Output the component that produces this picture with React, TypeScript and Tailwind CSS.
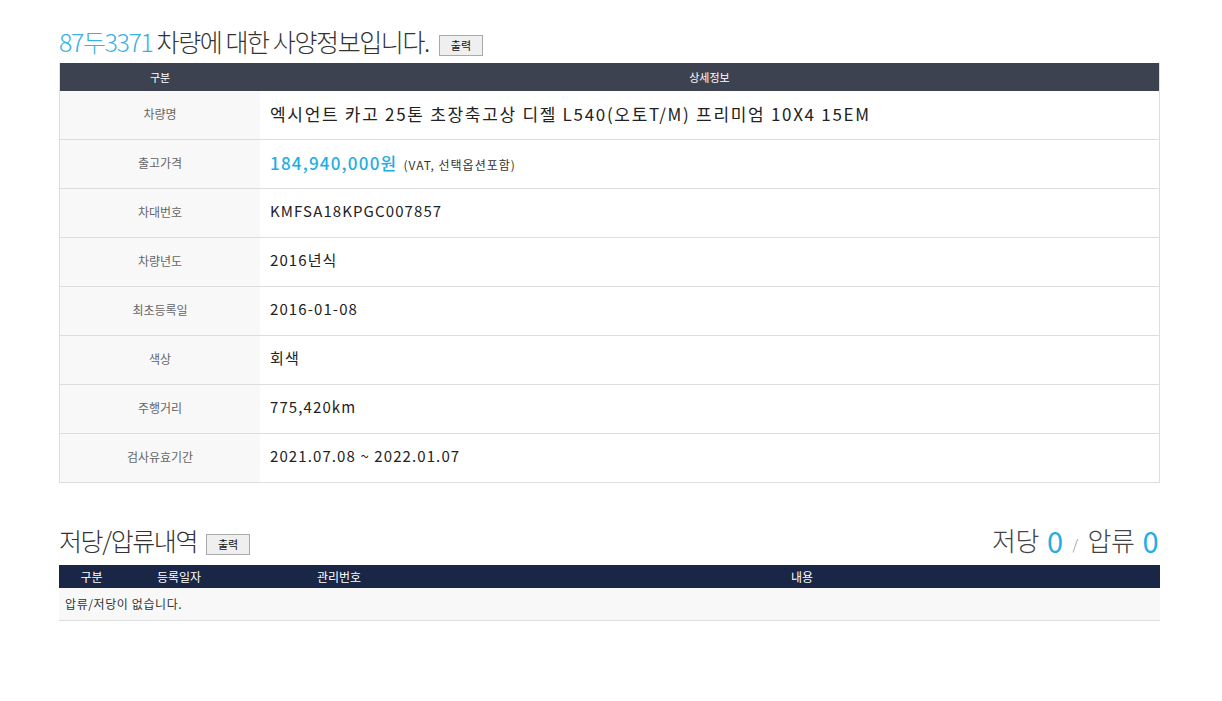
import React from 'react'

const font = { fontFamily: '"Noto Sans CJK KR", "Noto Sans", sans-serif' }

const rows: { label: string; value: React.ReactNode }[] = [
  {
    label: '차량명',
    value: (
      <span className="text-[17px] tracking-[1.7px] text-[#222]">
        엑시언트 카고 25톤 초장축고상 디젤 L540(오토T/M) 프리미엄 10X4 15EM
      </span>
    )
  },
  {
    label: '출고가격',
    value: (
      <span className="flex items-baseline gap-[6px]">
        <span className="text-[17px] font-medium tracking-[1.2px] text-[#1eaee4]">
          184,940,000원
        </span>
        <span className="text-[12px] tracking-[1px] text-[#333]">(VAT, 선택옵션포함)</span>
      </span>
    )
  },
  { label: '차대번호', value: 'KMFSA18KPGC007857' },
  { label: '차량년도', value: '2016년식' },
  { label: '최초등록일', value: '2016-01-08' },
  { label: '색상', value: '회색' },
  { label: '주행거리', value: '775,420km' },
  { label: '검사유효기간', value: '2021.07.08 ~ 2022.01.07' }
]

const PrintButton = () => (
  <button className="h-[21px] w-[44px] border border-[#aaa] bg-[#efefef] text-[11px] leading-none text-[#111]">
    출력
  </button>
)

const App = () => {
  return (
    <div className="min-h-[701px] w-full bg-white" style={font}>
      <div className="ml-[59px] w-[1101px] pt-[25px]">
        {/* 사양정보 */}
        <div className="flex items-end gap-[10px] pb-[6px]">
          <h1 className="text-[25px] font-light leading-[32px] tracking-[-1.4px] text-[#333]">
            <span className="text-[#39b1e3]">87두3371</span> 차량에 대한 사양정보입니다.
          </h1>
          <div className="pb-[1px]">
            <PrintButton />
          </div>
        </div>

        <div className="border-x border-[#ddd]">
          <div className="flex h-[28px] items-center bg-[#3d4250] text-[11px] text-white">
            <div className="w-[200px] text-center">구분</div>
            <div className="flex-1 text-center">상세정보</div>
          </div>
          {rows.map((r) => (
            <div key={r.label} className="flex h-[49px] border-b border-[#ddd]">
              <div className="flex w-[200px] items-center justify-center bg-[#f8f8f8] pb-[3px] text-[12px] text-[#666]">
                {r.label}
              </div>
              <div className="flex flex-1 items-center pb-[3px] pl-[10px] text-[15px] tracking-[1.1px] text-[#222]">
                {r.value}
              </div>
            </div>
          ))}
        </div>

        {/* 저당/압류 */}
        <div className="mt-[41px] flex items-end justify-between pb-[9px]">
          <div className="flex items-end gap-[9px]">
            <h2 className="text-[25px] font-light leading-[32px] tracking-[-1.4px] text-[#333]">
              저당/압류내역
            </h2>
            <div className="pb-[1px]">
              <PrintButton />
            </div>
          </div>
          <div className="flex items-end pr-[2px] text-[26px] font-light leading-[32px] tracking-[-0.5px] text-[#444]">
            <span>저당</span>
            <span className="ml-[8px] text-[29px] font-normal text-[#1eaee4]">0</span>
            <span className="mx-[10px] text-[14px] leading-[24px] text-[#888]">/</span>
            <span>압류</span>
            <span className="ml-[8px] text-[29px] font-normal text-[#1eaee4]">0</span>
          </div>
        </div>

        <div>
          <div className="flex h-[23px] items-center bg-[#1a2645] text-[12px] text-white">
            <div className="w-[65px] text-center">구분</div>
            <div className="w-[110px] text-center">등록일자</div>
            <div className="w-[210px] text-center">관리번호</div>
            <div className="flex-1 text-center">내용</div>
          </div>
          <div className="flex h-[33px] items-center border-b border-[#ddd] bg-[#f8f8f8] pl-[6px] text-[12px] tracking-[0.6px] text-[#333]">
            압류/저당이 없습니다.
          </div>
        </div>
      </div>
    </div>
  )
}

export default App
